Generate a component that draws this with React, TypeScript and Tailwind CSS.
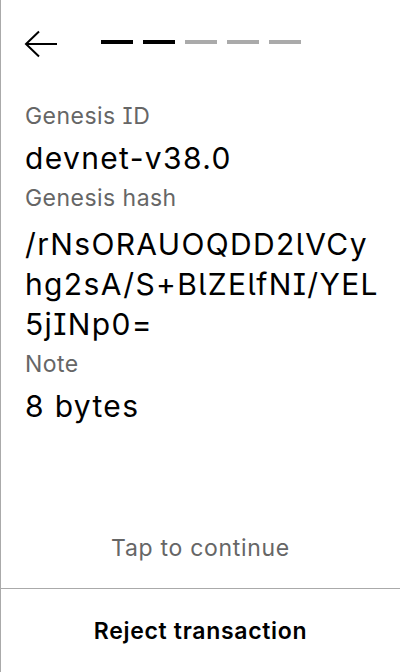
export default function App() {
  const steps = [true, true, false, false, false];
  return (
    <div
      className="flex h-[672px] w-[400px] flex-col border-l border-[#aaaaaa] bg-white text-black [font-feature-settings:'cv05','cv08']"
      style={{ fontFamily: 'Inter, "Noto Sans", sans-serif' }}
    >
      <div className="flex h-[87px] items-center px-[23px]">
        <svg width="34" height="28" viewBox="0 0 34 28" fill="none" stroke="black" strokeWidth="2">
          <path d="M33 14H2M15 1.5L2 14l13 12.5" />
        </svg>
        <div className="mb-[3px] ml-[43px] flex gap-[10px]">
          {steps.map((done, i) => (
            <div key={i} className={`h-[4px] w-[32px] ${done ? 'bg-black' : 'bg-[#aaaaaa]'}`} />
          ))}
        </div>
      </div>

      <div className="flex-1 pl-[24px] pr-[18px] pt-[15px]">
        <div className="text-[23px] leading-[28px] tracking-[0.02em] text-[#666666]">Genesis ID</div>
        <div className="mt-[8px] text-[30px] leading-[40px] tracking-[0.045em]">devnet-v38.0</div>
        <div className="mt-[6px] text-[23px] leading-[28px] tracking-[0.02em] text-[#666666]">Genesis hash</div>
        <div className="mt-[12px] break-all text-[30px] leading-[40px] tracking-[0.045em]">
          /rNsORAUOQDD2lVCyhg2sA/S+BlZElfNI/YEL5jINp0=
        </div>
        <div className="mt-[6px] text-[23px] leading-[28px] tracking-[0.02em] text-[#666666]">Note</div>
        <div className="mt-[8px] text-[30px] leading-[40px] tracking-[0.045em]">8 bytes</div>
      </div>

      <div className="pb-[26px] text-center text-[23px] leading-[28px] tracking-[0.03em] text-[#666666]">
        Tap to continue
      </div>
      <div className="flex h-[84px] items-center justify-center border-t border-[#aaaaaa] pt-[1px] text-[23px] font-semibold tracking-[0.03em]">
        Reject transaction
      </div>
    </div>
  );
}
